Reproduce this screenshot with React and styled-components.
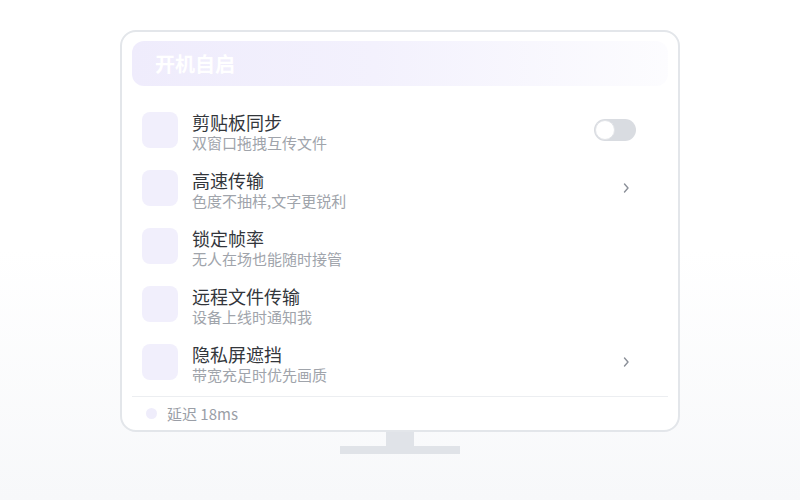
import React from "react";
import styled, { createGlobalStyle } from "styled-components";

const Global = createGlobalStyle`
  html, body { margin: 0; padding: 0; }
  body {
    font-family: "Noto Sans CJK SC", "Noto Sans", sans-serif;
    background: #fff;
  }
`;

const Page = styled.div`
  width: 800px;
  height: 500px;
  box-sizing: border-box;
  padding-top: 30px;
  display: flex;
  flex-direction: column;
  align-items: center;
  background: linear-gradient(180deg, #ffffff 0%, #ffffff 50%, #f7f8fa 100%);
`;

const Screen = styled.div`
  width: 560px;
  height: 402px;
  box-sizing: border-box;
  border: 2px solid #e3e6ea;
  border-radius: 16px;
  background: #fff;
  padding: 9px 10px 0;
  display: flex;
  flex-direction: column;
`;

const Banner = styled.div`
  height: 45px;
  flex: none;
  border-radius: 12px;
  background: linear-gradient(90deg, #efecfc 0%, #f3f1fd 45%, rgba(251, 251, 254, 0.7) 100%);
  display: flex;
  align-items: center;
  padding: 0 23px;
  color: #fff;
  font-size: 20px;
  font-weight: 700;
`;

const List = styled.div`
  margin-top: 15px;
  display: flex;
  flex-direction: column;
`;

const Row = styled.div`
  height: 58px;
  display: flex;
  align-items: center;
  padding: 0 32px 0 10px;
`;

const IconBox = styled.div`
  width: 36px;
  height: 36px;
  border-radius: 8px;
  background: #f1effc;
  flex: none;
`;

const Texts = styled.div`
  margin-left: 14px;
  margin-top: 4px;
  flex: 1;
  display: flex;
  flex-direction: column;
`;

const Title = styled.div`
  font-size: 18px;
  line-height: 22px;
  color: #33363b;
`;

const Sub = styled.div`
  font-size: 15px;
  line-height: 20px;
  color: #a0a4ab;
`;

const Toggle = styled.div`
  width: 42px;
  height: 22px;
  border-radius: 11px;
  background: #d9dce1;
  position: relative;
  flex: none;
  &::after {
    content: "";
    position: absolute;
    left: 1px;
    top: 1px;
    width: 18px;
    height: 18px;
    border-radius: 50%;
    background: #fff;
    border: 1px solid #e2e4e8;
  }
`;

const Chevron = styled.svg`
  width: 8px;
  height: 12px;
  margin-right: 6px;
  flex: none;
`;

const Divider = styled.div`
  height: 1px;
  background: #eceef1;
  margin-top: 5px;
  flex: none;
`;

const Footer = styled.div`
  height: 33px;
  display: flex;
  align-items: center;
  padding-left: 14px;
  gap: 10px;
  font-size: 15px;
  color: #9a9ea6;
`;

const Dot = styled.span`
  width: 11px;
  height: 11px;
  border-radius: 50%;
  background: #efedfb;
`;

const Neck = styled.div`
  width: 28px;
  height: 14px;
  background: #e0e3e8;
`;

const Base = styled.div`
  width: 120px;
  height: 8px;
  background: #e0e3e8;
`;

const rows = [
  { t: "剪贴板同步", s: "双窗口拖拽互传文件", a: "toggle" },
  { t: "高速传输", s: "色度不抽样,文字更锐利", a: "chevron" },
  { t: "锁定帧率", s: "无人在场也能随时接管" },
  { t: "远程文件传输", s: "设备上线时通知我" },
  { t: "隐私屏遮挡", s: "带宽充足时优先画质", a: "chevron" },
];

export default function App() {
  return (
    <>
      <Global />
      <Page>
        <Screen>
          <Banner>开机自启</Banner>
          <List>
            {rows.map((r) => (
              <Row key={r.t}>
                <IconBox />
                <Texts>
                  <Title>{r.t}</Title>
                  <Sub>{r.s}</Sub>
                </Texts>
                {r.a === "toggle" && <Toggle />}
                {r.a === "chevron" && (
                  <Chevron viewBox="0 0 8 12">
                    <polyline
                      points="2.5,2 6,6 2.5,10"
                      fill="none"
                      stroke="#8a8f98"
                      strokeWidth="1.4"
                      strokeLinecap="round"
                      strokeLinejoin="round"
                    />
                  </Chevron>
                )}
              </Row>
            ))}
          </List>
          <Divider />
          <Footer>
            <Dot />
            <span>延迟 18ms</span>
          </Footer>
        </Screen>
        <Neck />
        <Base />
      </Page>
    </>
  );
}
